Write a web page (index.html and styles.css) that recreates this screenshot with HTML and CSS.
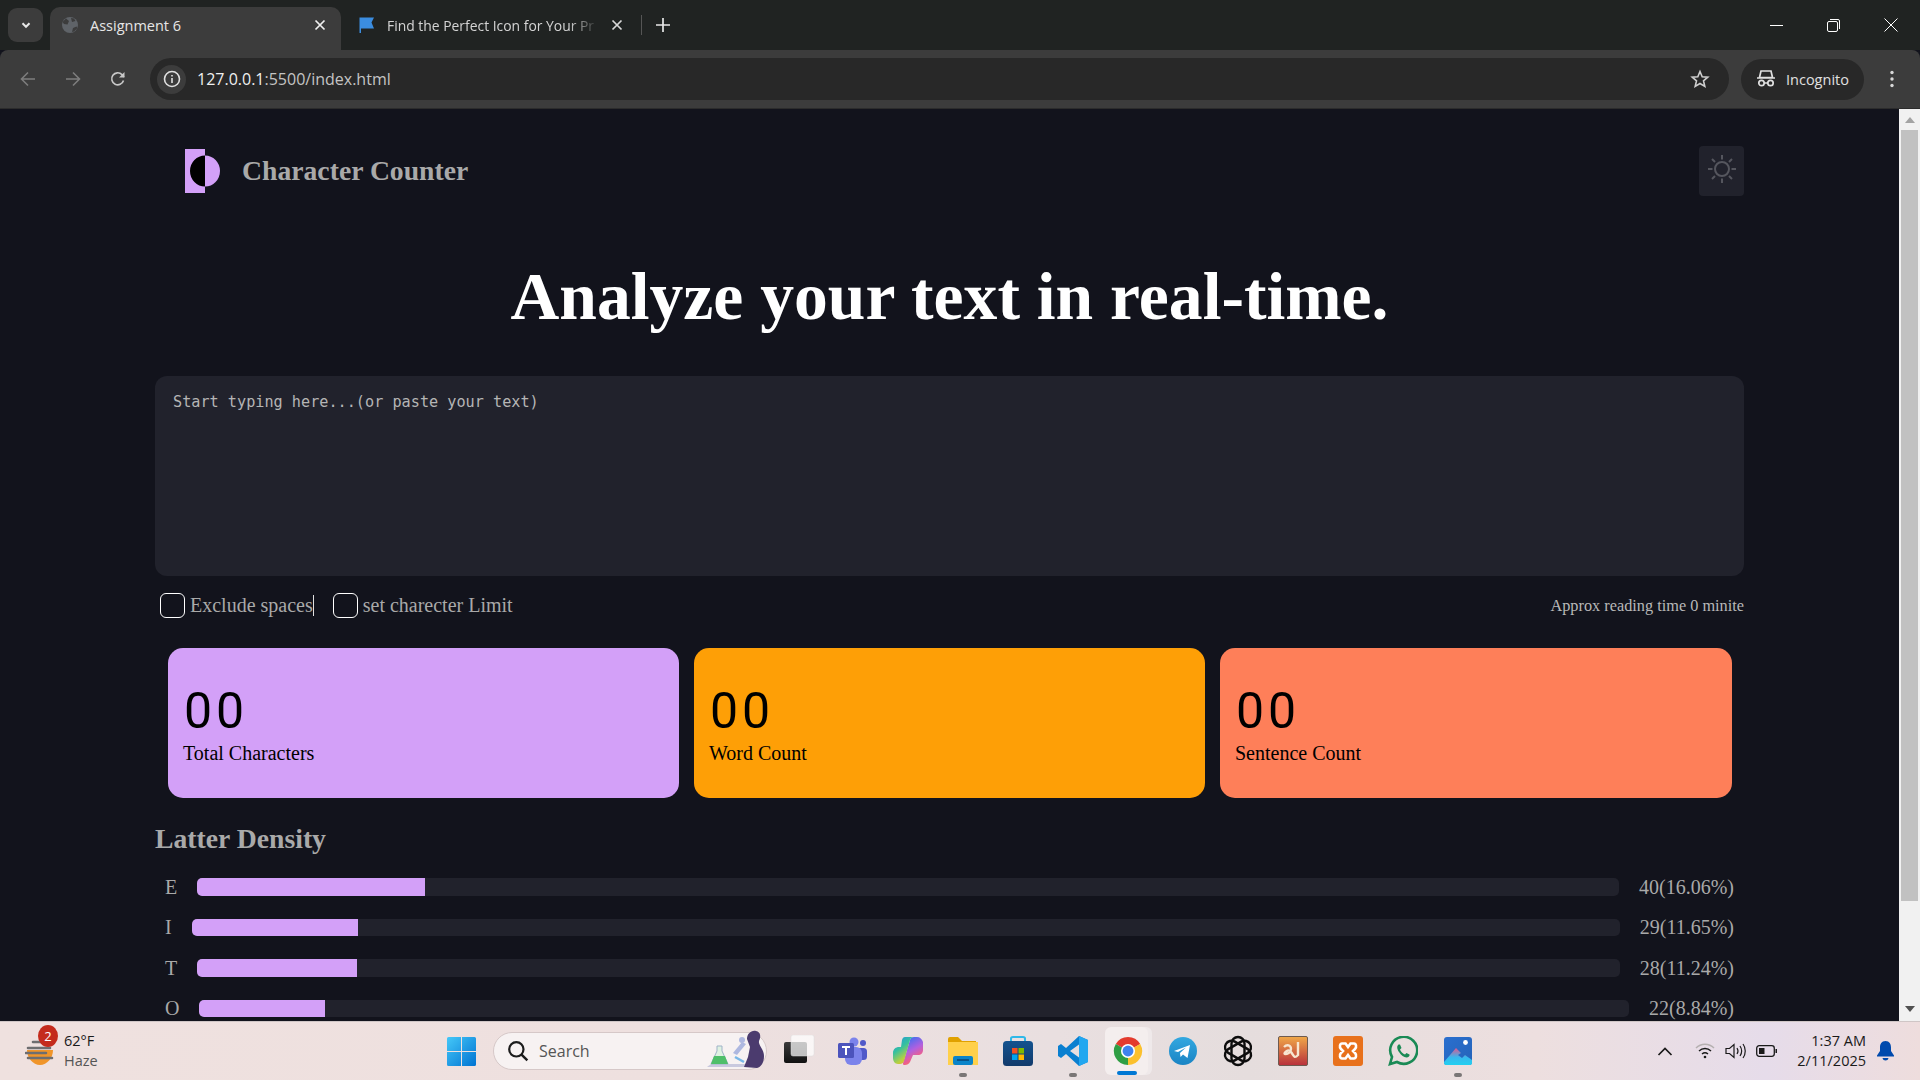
FILE: index.html
```html
<!DOCTYPE html>
<html lang="en">
<head>
  <meta charset="UTF-8" />
  <meta name="viewport" content="width=device-width, initial-scale=1.0"/>
  <title>Assignment 6</title>
  <link rel="stylesheet" href="styles.css">
</head>
<body>

  <!-- Browser tabs -->
  <div class="tabstrip">
    <button class="tab-search">
      <svg width="12" height="12" viewBox="0 0 12 12"><path d="M2.5 4.2 6 7.8l3.5-3.6" fill="none" stroke="#e8e8e8" stroke-width="2"/></svg>
    </button>
    <div class="tab active">
      <svg class="tab-icon" width="18" height="18" viewBox="0 0 18 18"><circle cx="9" cy="9" r="8" fill="#5f6368"/><path d="M5 2.5 8 5 6.5 8.5 3 8 1.5 6M11 16l1-4 3.5-1.5L16.5 12 13 15.5M10 2l3 .5 1.5 2.5L11 6Z" fill="#3c3c3c"/></svg>
      <span class="tab-title">Assignment 6</span>
      <svg class="tab-close" width="12" height="12" viewBox="0 0 12 12"><path d="M1.5 1.5l9 9m0-9-9 9" stroke="#f0f0f0" stroke-width="1.7"/></svg>
    </div>
    <div class="tab">
      <svg class="tab-icon" width="16" height="18" viewBox="0 0 16 18"><path d="M1 1.5h14l-2.5 5 2.5 6H2V17H.5V1.5Z" fill="#3b8de0"/></svg>
      <span class="tab-title faded">Find the Perfect Icon for Your Pr</span>
      <svg class="tab-close" width="12" height="12" viewBox="0 0 12 12"><path d="M1.5 1.5l9 9m0-9-9 9" stroke="#d8d8d8" stroke-width="1.7"/></svg>
    </div>
    <span class="tab-sep"></span>
    <svg class="tab-new" width="14" height="14" viewBox="0 0 14 14"><path d="M7 0v14M0 7h14" stroke="#e8e8e8" stroke-width="1.7"/></svg>
    <div class="win-controls">
      <svg width="13" height="13" viewBox="0 0 13 13"><path d="M0 6.5h13" stroke="#fff"/></svg>
      <svg width="13" height="13" viewBox="0 0 13 13"><rect x=".5" y="2.5" width="10" height="10" rx="1.5" fill="none" stroke="#fff"/><path d="M3 .5h8A1.5 1.5 0 0 1 12.5 2v8" fill="none" stroke="#fff"/></svg>
      <svg width="14" height="14" viewBox="0 0 14 14"><path d="M.5.5l13 13m0-13-13 13" stroke="#fff"/></svg>
    </div>
  </div>

  <!-- Browser toolbar -->
  <div class="toolbar">
    <svg class="nav-icon" width="16" height="16" viewBox="0 0 16 16"><path d="M15 8H2m6-6.5L1.5 8 8 14.5" fill="none" stroke="#7d7d7d" stroke-width="1.6"/></svg>
    <svg class="nav-icon" width="16" height="16" viewBox="0 0 16 16"><path d="M1 8h13M8 1.5 14.5 8 8 14.5" fill="none" stroke="#7d7d7d" stroke-width="1.6"/></svg>
    <svg class="nav-icon" width="16" height="16" viewBox="0 0 16 16"><path d="M13.5 9.5A6 6 0 1 1 12 3.6L14 6" fill="none" stroke="#c8c8c8" stroke-width="1.6"/><path d="M14.5 1v5.5H9Z" fill="#c8c8c8"/></svg>
    <div class="address">
      <span class="site-info">
        <svg width="18" height="18" viewBox="0 0 18 18"><circle cx="9" cy="9" r="7.5" fill="none" stroke="#e0e0e0" stroke-width="1.6"/><path d="M9 8v5M9 5v1.6" stroke="#e0e0e0" stroke-width="1.6"/></svg>
      </span>
      <span class="url">127.0.0.1<span class="url-rest">:5500/index.html</span></span>
      <svg class="star" width="20" height="20" viewBox="0 0 20 20"><path d="M10 2.5l2.2 5.2 5.6.5-4.3 3.7 1.3 5.5L10 14.5l-4.8 2.9 1.3-5.5L2.2 8.2l5.6-.5Z" fill="none" stroke="#cfcfcf" stroke-width="1.6"/></svg>
    </div>
    <div class="incognito">
      <svg width="20" height="18" viewBox="0 0 20 18"><path d="M5 1h10l1.5 6.5h-13ZM1 8h18" fill="none" stroke="#e0e0e0" stroke-width="1.7"/><circle cx="5.5" cy="13" r="2.7" fill="none" stroke="#e0e0e0" stroke-width="1.7"/><circle cx="14.5" cy="13" r="2.7" fill="none" stroke="#e0e0e0" stroke-width="1.7"/><path d="M8 13h4" stroke="#e0e0e0" stroke-width="1.5"/></svg>
      <span>Incognito</span>
    </div>
    <svg class="menu-dots" width="6" height="18" viewBox="0 0 6 18"><circle cx="3" cy="2.5" r="1.7" fill="#d8d8d8"/><circle cx="3" cy="9" r="1.7" fill="#d8d8d8"/><circle cx="3" cy="15.5" r="1.7" fill="#d8d8d8"/></svg>
  </div>

  <div class="viewport">
    <main class="page">
      <header class="site-header">
        <div class="brand">
          <svg width="35" height="44" viewBox="0 0 35 44"><rect width="20" height="44" fill="#d3a0f8"/><path d="M20 6.5A15 15.5 0 0 0 20 37.5Z" fill="#000"/><path d="M20 6.5A15 15.5 0 0 1 20 37.5Z" fill="#d3a0f8"/></svg>
          <span class="brand-name">Character Counter</span>
        </div>
        <button class="theme-btn">
          <svg width="28" height="28" viewBox="0 0 28 28"><circle cx="14" cy="14" r="7" fill="none" stroke="#55565e" stroke-width="2"/><path d="M14 0v4.5M14 23.5V28M0 14h4.5M23.5 14H28M4 4l3 3M21 21l3 3M4 24l3-3M21 7l3-3" stroke="#55565e" stroke-width="2"/></svg>
        </button>
      </header>

      <h1 class="headline">Analyze your text in real-time.</h1>

      <textarea class="text-input" placeholder="Start typing here...(or paste your text)"></textarea>

      <div class="options">
        <label class="option"><span class="check"></span><span class="caret-text">Exclude spaces</span></label>
        <label class="option"><span class="check"></span><span>set charecter Limit</span></label>
        <span class="reading-time">Approx reading time 0 minite</span>
      </div>

      <section class="stats">
        <div class="stat-card purple"><div class="stat-num">00</div><div class="stat-label">Total Characters</div></div>
        <div class="stat-card orange"><div class="stat-num">00</div><div class="stat-label">Word Count</div></div>
        <div class="stat-card coral"><div class="stat-num">00</div><div class="stat-label">Sentence Count</div></div>
      </section>

      <h2 class="density-title">Latter Density</h2>
      <div class="density">
        <div class="density-row"><span>E</span><div class="track"><div class="fill" style="width:16%"></div></div><span>40(16.06%)</span></div>
        <div class="density-row"><span>I</span><div class="track"><div class="fill" style="width:11.65%"></div></div><span>29(11.65%)</span></div>
        <div class="density-row"><span>T</span><div class="track"><div class="fill" style="width:11.24%"></div></div><span>28(11.24%)</span></div>
        <div class="density-row"><span>O</span><div class="track"><div class="fill" style="width:8.8%"></div></div><span>22(8.84%)</span></div>
      </div>
    </main>

    <div class="scrollbar">
      <svg class="arrow" width="10" height="6" viewBox="0 0 10 6"><path d="M5 0l5 6H0Z" fill="#a3a3a3"/></svg>
      <div class="thumb"></div>
      <svg class="arrow" width="10" height="6" viewBox="0 0 10 6"><path d="M0 0h10L5 6Z" fill="#505050"/></svg>
    </div>
  </div>

  <!-- Windows taskbar -->
  <footer class="taskbar">
    <div class="weather">
      <svg width="30" height="28" viewBox="0 0 30 28"><path d="M2 13h26C28 21 22 28 15 28S2 21 2 13Z" fill="#f0952a"/><path d="M8 5h10M3 11h22M1 16h20M3 21h24" stroke="#6e6e70" stroke-width="2.6" stroke-linecap="round"/></svg>
      <span class="badge">2</span>
      <div class="weather-text"><span>62°F</span><span class="haze">Haze</span></div>
    </div>

    <svg class="start" width="29" height="29" viewBox="0 0 29 29">
      <defs><linearGradient id="winGrad" x1="0" y1="0" x2="1" y2="1"><stop offset="0" stop-color="#45c8f8"/><stop offset="1" stop-color="#0073d2"/></linearGradient></defs>
      <path d="M0 1.5A1.5 1.5 0 0 1 1.5 0H14v14H0ZM15 0h12.5A1.5 1.5 0 0 1 29 1.5V14H15ZM0 15h14v14H1.5A1.5 1.5 0 0 1 0 27.5ZM15 15h14v12.5a1.5 1.5 0 0 1-1.5 1.5H15Z" fill="url(#winGrad)"/>
    </svg>

    <div class="search">
      <svg width="22" height="22" viewBox="0 0 20 20"><circle cx="8.5" cy="8.5" r="6.5" fill="none" stroke="#1c1c1c" stroke-width="2"/><path d="M13 13l5.5 5.5" stroke="#1c1c1c" stroke-width="2.2"/></svg>
      <span>Search</span>
      <svg class="search-art" width="60" height="40" viewBox="0 0 60 40">
        <path d="M1 37h44l-3-3H5Z" fill="#c9c9de"/>
        <path d="M11 16h5v5l6 13H5l6-13Z" fill="#dff2e2" stroke="#9fb3c8"/>
        <path d="M8 26h11l3 8H5Z" fill="#4fbf6a"/>
        <path d="M27 23l9-11 4 2-9 11Z" fill="#aeb8e0"/>
        <circle cx="36" cy="10" r="3" fill="#aeb8e0"/>
        <path d="M41 9c0-5 4-9 9-8s5 6 3 10c-1 4 5 8 5 15 0 7-3 11-7 12l-13-1 4-10 2-10Z" fill="#4b3b6e"/>
        <path d="M29 27l9 5" stroke="#79b8e8" stroke-width="2.5"/>
      </svg>
    </div>

    <div class="apps">
      <div class="app">
        <svg class="task-view" width="32" height="32" viewBox="0 0 32 32"><defs><linearGradient id="tvGrad" x1="0" y1="0" x2="0" y2="1"><stop offset="0" stop-color="#3a3a3a"/><stop offset="1" stop-color="#111"/></linearGradient></defs><rect x="0" y="7" width="23" height="21" rx="2" fill="url(#tvGrad)"/><rect x="7" y="0" width="23" height="21" rx="2" fill="#fff" fill-opacity=".72" stroke="#ddd" stroke-width=".5"/></svg>
      </div>
      <div class="app">
        <svg width="30" height="28" viewBox="0 0 30 28"><circle cx="25" cy="6" r="3" fill="#5059c9"/><rect x="19" y="11" width="10" height="12" rx="3.5" fill="#5059c9"/><circle cx="16" cy="5" r="4.5" fill="#7b83eb"/><rect x="7" y="10" width="17" height="18" rx="6" fill="#7b83eb"/><rect x="0" y="6" width="16" height="15" rx="1.5" fill="#4b53bc"/><path d="M4 10h8M8 10v8" stroke="#fff" stroke-width="2"/></svg>
      </div>
      <div class="app">
        <svg width="30" height="30" viewBox="0 0 30 30"><defs><linearGradient id="copA" x1="0" y1="0" x2=".6" y2="1"><stop offset="0" stop-color="#1f8fe8"/><stop offset=".45" stop-color="#35c0a0"/><stop offset=".8" stop-color="#b8d040"/><stop offset="1" stop-color="#f0b030"/></linearGradient><linearGradient id="copB" x1=".3" y1="0" x2=".7" y2="1"><stop offset="0" stop-color="#3a6ff0"/><stop offset=".45" stop-color="#b060e0"/><stop offset=".75" stop-color="#ee5f8c"/><stop offset="1" stop-color="#f58a3c"/></linearGradient></defs><path d="M24 1c3 0 5 2 6 5v8c0 3-2 5-5 5h-5l-3 7c-1 2-3 3-5 3h-1c-1 0-1-1-1-2l7-23c.5-2 2-3 4-3Z" fill="url(#copB)"/><path d="M12 1h9c-2 0-3.5 1-4 3L11 25c-.5 2-2 3-4 3H5c-3 0-5-3-5-6v-5c0-4 3-6 6-6h2l1-7c.5-2 1.5-3 3-3Z" fill="url(#copA)"/></svg>
      </div>
      <div class="app">
        <svg width="30" height="28" viewBox="0 0 30 28"><path d="M0 2a2 2 0 0 1 2-2h8l4 4h14v6H0Z" fill="#e0a100"/><path d="M0 5h30v23H0Z" fill="#ffd04a"/><rect x="5" y="19" width="20" height="9" rx="2" fill="#0a84c9"/><path d="M9 23h12" stroke="#063f6d" stroke-width="1.4"/></svg>
        <span class="run-dot"></span>
      </div>
      <div class="app">
        <svg width="30" height="30" viewBox="0 0 30 30"><defs><linearGradient id="stGrad" x1="0" y1="0" x2="0" y2="1"><stop offset="0" stop-color="#14538f"/><stop offset="1" stop-color="#123a6b"/></linearGradient></defs><path d="M8 6V2.5C8 1.5 9 1 10 1h10c1 0 2 .5 2 1.5V6" fill="none" stroke="#2fb8e8" stroke-width="2"/><rect y="5" width="30" height="25" rx="3.5" fill="url(#stGrad)"/><rect x="9" y="12" width="5.5" height="5.5" fill="#f25022"/><rect x="15.5" y="12" width="5.5" height="5.5" fill="#7fba00"/><rect x="9" y="18.5" width="5.5" height="5.5" fill="#00a4ef"/><rect x="15.5" y="18.5" width="5.5" height="5.5" fill="#ffb900"/></svg>
      </div>
      <div class="app">
        <svg width="30" height="30" viewBox="0 0 30 30"><path d="M21 0l9 4v22l-9 4-13-12-5 4-3-2V10l3-2 5 4Zm0 8.5L12 15l9 6.5Z" fill="#0a7fd0" fill-rule="evenodd"/><path d="M21 0l9 4v22l-9 4Z" fill="#22a7f0"/></svg>
        <span class="run-dot"></span>
      </div>
      <div class="app current">
        <span class="app-stack"></span>
        <svg width="30" height="30" viewBox="0 0 32 32"><path d="M16 16 3 8.5A15 15 0 0 1 29 8.5Z" fill="#e33b2e"/><path d="M16 16 29 8.5A15 15 0 0 1 16 31Z" fill="#fbc02d"/><path d="M16 16V31A15 15 0 0 1 3 8.5Z" fill="#2f9e44"/><circle cx="16" cy="16" r="7.5" fill="#fff"/><circle cx="16" cy="16" r="5.8" fill="#3f83ee"/></svg>
        <span class="run-bar"></span>
      </div>
      <div class="app">
        <svg width="28" height="28" viewBox="0 0 28 28"><defs><linearGradient id="tgGrad" x1="0" y1="0" x2="0" y2="1"><stop offset="0" stop-color="#33a8e0"/><stop offset="1" stop-color="#1a84c4"/></linearGradient></defs><circle cx="14" cy="14" r="14" fill="url(#tgGrad)"/><path d="M5 14 21 8l-2.5 13-4.5-3.5-2.5 2.5-.5-4 6-5.5-8 4.5Z" fill="#fff"/></svg>
      </div>
      <div class="app">
        <svg width="32" height="32" viewBox="0 0 32 32" fill="none" stroke="#0d0d0d" stroke-width="2.4"><rect x="9.5" y="2" width="13" height="28" rx="6.5"/><rect x="9.5" y="2" width="13" height="28" rx="6.5" transform="rotate(60 16 16)"/><rect x="9.5" y="2" width="13" height="28" rx="6.5" transform="rotate(120 16 16)"/></svg>
      </div>
      <div class="app">
        <svg width="30" height="30" viewBox="0 0 30 30"><defs><linearGradient id="bnGrad" x1="0" y1="0" x2="0" y2="1"><stop offset="0" stop-color="#f0a848"/><stop offset="1" stop-color="#b8303c"/></linearGradient></defs><rect x=".5" y=".5" width="29" height="29" rx="1.5" fill="url(#bnGrad)" stroke="#6e5a50"/><path d="M6 11c3-3 7-2 7 2s-4 5-6 5 3-6 6-2 3 7 7 3V6" fill="none" stroke="#f7e6d0" stroke-width="2.4"/></svg>
      </div>
      <div class="app">
        <svg width="30" height="30" viewBox="0 0 30 30"><rect width="30" height="30" rx="3" fill="#e8711c"/><path d="M9 7.5h3.5L15 11l2.5-3.5H21c2 0 3 3.5 1 5.500l-2 2 2 2c2 2 1 5.500-1 5.500h-3.500L15 19l-2.500 3.500H9c-2 0-3-3.500-1-5.500l2-2-2-2c-2-2-1-5.500 1-5.500Z" fill="none" stroke="#fff" stroke-width="2.6"/></svg>
      </div>
      <div class="app">
        <svg width="30" height="30" viewBox="0 0 30 30"><path d="M2 28l2-7A13.5 13.5 0 1 1 9 26Z" fill="none" stroke="#1a8a55" stroke-width="2.6"/><path d="M10.5 8.5c-2 1.5-1.5 4.5.5 7.5s5 5.5 7.5 5.500c2 0 3.500-1.500 3-3l-3-1.500-1.500 1.500c-2-.5-4.500-3-5-5l1.500-1.500-1.500-3.500Z" fill="#1a8a55"/></svg>
      </div>
      <div class="app">
        <svg width="28" height="28" viewBox="0 0 28 28"><defs><linearGradient id="phGrad" x1="0" y1="0" x2="1" y2="1"><stop offset="0" stop-color="#2a6fcf"/><stop offset="1" stop-color="#2563b8"/></linearGradient><linearGradient id="phMt" x1="0" y1="0" x2="0" y2="1"><stop offset="0" stop-color="#e0568f"/><stop offset=".55" stop-color="#38b8ee"/><stop offset="1" stop-color="#22d0f0"/></linearGradient></defs><rect width="28" height="28" rx="3" fill="url(#phGrad)"/><circle cx="21.5" cy="5.5" r="2.4" fill="#fff"/><path d="M0 25 12 11l5 5-3 2 4 3 3-3 7 5v3a2 2 0 0 1-2 2H2a2 2 0 0 1-2-2Z" fill="url(#phMt)"/></svg>
        <span class="run-dot"></span>
      </div>
    </div>

    <div class="tray">
      <svg width="16" height="9" viewBox="0 0 16 9"><path d="M1.5 8 8 1.5 14.5 8" fill="none" stroke="#1a1a1a" stroke-width="1.7"/></svg>
      <svg width="20" height="16" viewBox="0 0 20 16" fill="none" stroke="#1a1a1a" stroke-width="1.5"><path d="M1 5c5-5 13-5 18 0" stroke="#b5b0b0"/><path d="M4 8c3.5-3.2 8.5-3.2 12 0M7 11c2-1.6 4-1.6 6 0"/><circle cx="10" cy="14" r="1.3" fill="#1a1a1a" stroke="none"/></svg>
      <svg width="21" height="16" viewBox="0 0 21 16" fill="none" stroke="#1a1a1a" stroke-width="1.2"><path d="M1 5.5h3.5L9 1.5v13l-4.5-4H1Z"/><path d="M12 5c1.2 1.8 1.2 4.2 0 6M15 3c2 3 2 7 0 10M18 1c3 4 3 10 0 14"/></svg>
      <svg width="21" height="12" viewBox="0 0 21 12"><rect x=".7" y=".7" width="17.6" height="10.6" rx="2.5" fill="none" stroke="#1a1a1a" stroke-width="1.3"/><rect x="3" y="3" width="5.5" height="6" fill="#1a1a1a"/><path d="M19.5 4H21v4h-1.5Z" fill="#1a1a1a"/></svg>
      <div class="clock"><span>1:37 AM</span><span>2/11/2025</span></div>
      <svg width="17" height="20" viewBox="0 0 17 20"><path d="M8.5 0C4.5 0 3 3 3 6.5V10L0 14.5v1h17v-1L14 10V6.5C14 3 12.5 0 8.5 0Z" fill="#004aad"/><path d="M5.5 17h6c-.5 1.8-1.5 2.5-3 2.5S6 18.8 5.5 17Z" fill="#004aad"/></svg>
    </div>
  </footer>

</body>
</html>
```

FILE: styles.css
```css
* {
  box-sizing: border-box;
}

body {
  margin: 0;
  height: 1080px;
  overflow: hidden;
  display: flex;
  flex-direction: column;
  font-family: "Liberation Serif", serif;
  background: #12131c;
}

/* Browser tabs */
.tabstrip {
  height: 50px;
  flex: none;
  display: flex;
  align-items: flex-end;
  background: #202322;
  font-family: "Open Sans", sans-serif;
  font-size: 14.5px;
  color: #e6e6e6;
}

.tab-search {
  width: 35px;
  height: 34px;
  margin: 0 7px 8px 8px;
  padding: 0;
  border: none;
  border-radius: 9px;
  background: #3c3c3c;
  display: flex;
  align-items: center;
  justify-content: center;
}

.tab {
  width: 291px;
  height: 43px;
  padding: 0 15px 7px 10px;
  display: flex;
  align-items: center;
  border-radius: 10px 10px 0 0;
}

.tab.active {
  background: #3c3c3c;
}

.tab + .tab {
  width: 297px;
  padding: 0 15px 7px 18px;
}

.tab-icon {
  flex: none;
  margin-right: 12px;
}

.tab.active .tab-icon {
  margin-left: 1px;
  margin-right: 11px;
}

.tab-title {
  flex: 1;
  white-space: nowrap;
  overflow: hidden;
}

.tab-title.faded {
  color: #d4d4d4;
  font-size: 13.9px;
  margin-right: 12px;
  -webkit-mask-image: linear-gradient(to left, transparent, #000 30px);
  mask-image: linear-gradient(to left, transparent, #000 30px);
}

.tab-close {
  flex: none;
}

.tab-sep {
  width: 1px;
  height: 20px;
  margin: 0 0 15px 3px;
  background: #555;
}

.tab-new {
  margin: 0 0 18px 14px;
}

.win-controls {
  margin-left: auto;
  width: 150px;
  height: 50px;
  padding: 0 22px 0 0;
  display: flex;
  align-items: center;
  justify-content: space-between;
  align-self: flex-start;
}

/* Browser toolbar */
.toolbar {
  height: 58px;
  flex: none;
  display: flex;
  align-items: center;
  padding: 0 0 0 20px;
  background: #3c3c3c;
  border-radius: 8px 8px 0 0;
  font-family: "Open Sans", sans-serif;
  color: #e0e0e0;
}

.nav-icon {
  flex: none;
  margin-right: 29px;
}

.nav-icon:nth-child(3) {
  margin-right: 24px;
}

.address {
  width: 1579px;
  height: 42px;
  padding: 0 15px 0 7px;
  display: flex;
  align-items: center;
  border-radius: 21px;
  background: #282828;
  font-size: 16px;
}

.site-info {
  width: 29px;
  height: 29px;
  margin-right: 11px;
  display: flex;
  align-items: center;
  justify-content: center;
  border-radius: 50%;
  background: #3c3c3c;
}

.url {
  flex: 1;
  color: #f0f0f0;
}

.url-rest {
  color: #c4c4c4;
}

.star {
  flex: none;
  margin-right: 4px;
}

.incognito {
  width: 123px;
  height: 41px;
  margin-left: 12px;
  padding-left: 15px;
  display: flex;
  align-items: center;
  gap: 10px;
  border-radius: 21px;
  background: #282828;
  font-size: 14.5px;
}

.menu-dots {
  margin-left: 25px;
}

/* Page */
.viewport {
  flex: 1;
  min-height: 0;
  display: flex;
  border-top: 1px solid #2c2c2c;
}

.page {
  width: 1899px;
  padding: 0 155px;
  overflow: hidden;
  background: #12131c;
  color: #a9a9a9;
}

.site-header {
  display: flex;
  align-items: center;
  justify-content: space-between;
  height: 50px;
  margin-top: 37px;
  padding-left: 30px;
}

.brand {
  display: flex;
  align-items: center;
  gap: 22px;
}

.brand-name {
  font-size: 27.7px;
  font-weight: bold;
}

.theme-btn {
  width: 45px;
  height: 50px;
  padding: 0 0 4px;
  border: none;
  border-radius: 4px;
  background: #21222c;
  display: flex;
  align-items: center;
  justify-content: center;
}

.headline {
  margin: 64px 0 0;
  font-size: 67.6px;
  line-height: 74px;
  text-align: center;
  color: #fff;
}

.text-input {
  display: block;
  width: 100%;
  height: 200px;
  margin-top: 42px;
  padding: 17px 18px;
  border: none;
  border-radius: 12px;
  resize: none;
  background: #21222c;
  color: #bbb;
  font-family: "DejaVu Sans Mono", monospace;
  font-size: 15.2px;
}

.text-input::placeholder {
  color: #b5b5b5;
  opacity: 1;
}

.options {
  display: flex;
  align-items: center;
  height: 25px;
  margin-top: 17px;
  padding-left: 5px;
  font-size: 20px;
}

.option {
  display: flex;
  align-items: center;
  gap: 5px;
  margin-right: 19px;
}

.check {
  width: 25px;
  height: 25px;
  border: 1px solid #fff;
  border-radius: 6px;
}

.caret-text {
  border-right: 1px solid #e0e0e0;
  line-height: 21px;
}

.reading-time {
  margin-left: auto;
  font-size: 16.3px;
  color: #b8b8b8;
}

.stats {
  display: flex;
  gap: 15px;
  margin-top: 30px;
  padding: 0 12px 0 13px;
}

.stat-card {
  width: 511px;
  height: 150px;
  padding: 2px 15px 0;
  display: flex;
  flex-direction: column;
  justify-content: center;
  border-radius: 15px;
  color: #000;
}

.stat-card:last-child {
  flex: 1;
}

.purple {
  background: #d3a0f8;
}

.orange {
  background: #fe9f06;
}

.coral {
  background: #fe7f59;
}

.stat-num {
  padding-left: 1px;
  font-family: Roboto, sans-serif;
  font-size: 50px;
  line-height: 56px;
  letter-spacing: 4px;
}

.stat-label {
  margin-top: 3px;
  font-size: 20px;
  line-height: 23px;
}

.density-title {
  margin: 26px 0 0;
  font-size: 27.7px;
  line-height: 30px;
}

.density {
  display: flex;
  flex-direction: column;
  gap: 17.5px;
  margin-top: 21.5px;
  padding: 0 10px;
}

.density-row {
  display: flex;
  align-items: center;
  gap: 20px;
  font-size: 20px;
  line-height: 23px;
}

.track {
  flex: 1;
  height: 17.6px;
  border-radius: 5px;
  background: #21222c;
}

.fill {
  height: 100%;
  border-radius: 5px 0 0 5px;
  background: #d3a0f8;
}

.scrollbar {
  flex: 1;
  display: flex;
  flex-direction: column;
  align-items: center;
  background: #f1f1f1;
}

.arrow {
  flex: none;
  margin: 8px 0;
}

.thumb {
  width: 17px;
  height: 771px;
  margin-top: -1px;
  background: #c1c1c1;
}

.thumb + .arrow {
  margin-top: 105px;
}

/* Windows taskbar */
.taskbar {
  height: 59px;
  flex: none;
  display: flex;
  align-items: center;
  border-top: 1px solid #cfc6c6;
  background: linear-gradient(90deg, #efe1df 0%, #eee0df 35%, #e9dfe0 55%, #e5dddd 65%, #eddfdf 80%, #e6dcea 92%, #eedddd 100%);
  font-family: "Open Sans", sans-serif;
  font-size: 14.5px;
  color: #1a1a1a;
}

.weather {
  position: relative;
  width: 447px;
  flex: none;
  display: flex;
  align-items: center;
  gap: 9px;
  padding-left: 25px;
}

.badge {
  position: absolute;
  left: 38px;
  top: -6px;
  width: 20px;
  height: 22px;
  border-radius: 50%;
  background: #c42b1c;
  color: #fff;
  font-size: 13px;
  line-height: 22px;
  text-align: center;
}

.weather-text {
  display: flex;
  flex-direction: column;
  line-height: 20px;
}

.haze {
  color: #555;
}

.start {
  flex: none;
  margin-right: 17px;
}

.search {
  position: relative;
  width: 274px;
  height: 38px;
  flex: none;
  display: flex;
  align-items: center;
  gap: 10px;
  padding-left: 13px;
  border: 1px solid #d6c8c8;
  border-radius: 19px;
  background: #f7f2f2;
  font-size: 16px;
  color: #555;
}

.search-art {
  position: absolute;
  right: 0;
  bottom: -1px;
}

.apps {
  display: flex;
  margin-left: 3px;
}

.app {
  position: relative;
  width: 55px;
  height: 48px;
  display: flex;
  align-items: center;
  justify-content: center;
}

.task-view {
  margin-left: 4px;
}

.app.current::before {
  content: "";
  position: absolute;
  left: 5px;
  top: 0;
  width: 43px;
  height: 48px;
  border-radius: 6px;
  background: #f4eeee;
  z-index: 1;
}

.app.current svg {
  position: relative;
  z-index: 2;
}

.app-stack {
  position: absolute;
  left: 40px;
  top: 0;
  width: 12px;
  height: 48px;
  border-radius: 0 6px 6px 0;
  background: #efe9ea;
}

.run-dot,
.run-bar {
  position: absolute;
  left: 50%;
  bottom: -2px;
  width: 8px;
  height: 4px;
  margin-left: -4px;
  border-radius: 2px;
  background: #7a7676;
}

.run-bar {
  left: 26.5px;
  width: 20px;
  margin-left: -10px;
  bottom: 0;
  background: #0078d4;
  z-index: 2;
}

.tray {
  margin-left: auto;
  padding-right: 26px;
  display: flex;
  align-items: center;
  gap: 10px;
}

.tray > svg:first-child {
  margin-right: 12px;
}

.clock {
  margin-left: 10px;
  margin-right: 1px;
  display: flex;
  flex-direction: column;
  align-items: flex-end;
  font-size: 14.5px;
  line-height: 20px;
}
```
